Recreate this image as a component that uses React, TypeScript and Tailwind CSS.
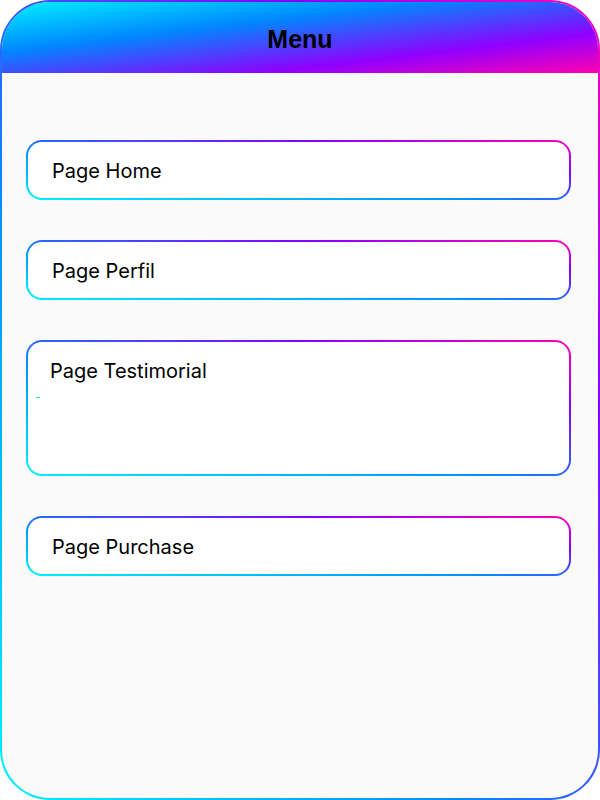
import React from 'react';

const pages = [
  { label: 'Page Home', tall: false },
  { label: 'Page Perfil', tall: false },
  { label: 'Page Testimorial', tall: true },
  { label: 'Page Purchase', tall: false },
];

function PageCard({ label, tall }: { label: string; tall: boolean }) {
  return (
    <div className="rounded-[16px] p-[2px] bg-[linear-gradient(to_top_right,#00f2ff,#0094ff_40%,#8a00ff_75%,#ff00b4)]">
      {tall ? (
        <div className="relative h-[132px] rounded-[14px] bg-white pl-[22px] pt-[16px]">
          <span className="text-[20px] leading-[26px] text-black">{label}</span>
          <span className="absolute left-[8px] top-[55px] h-[1px] w-[4px] bg-[#00e5ff]" />
        </div>
      ) : (
        <div className="flex h-[56px] items-center rounded-[14px] bg-white pl-[24px] pt-[2px]">
          <span className="text-[20px] leading-[26px] text-black">{label}</span>
        </div>
      )}
    </div>
  );
}

export default function App() {
  return (
    <div className="h-[800px] w-[600px] rounded-[50px] p-[2px] bg-[linear-gradient(to_top_right,#00f2ff,#0094ff_35%,#8a00ff_75%,#ff00b4)] font-['Inter',sans-serif]">
      <div className="flex h-full flex-col overflow-hidden rounded-[48px] bg-[#fafafa]">
        <div className="flex h-[71px] shrink-0 items-center justify-center bg-[linear-gradient(to_bottom_right,#00f2ff,#0088ff_35%,#9000ff_72%,#ff00b0)]">
          <h1 className="pt-[4px] font-['Liberation_Sans',Arial,sans-serif] text-[25px] font-bold text-black">Menu</h1>
        </div>
        <div className="flex flex-col gap-[40px] pl-[24px] pr-[27px] pt-[67px]">
          {pages.map(p => (
            <PageCard key={p.label} label={p.label} tall={p.tall} />
          ))}
        </div>
      </div>
    </div>
  );
}
